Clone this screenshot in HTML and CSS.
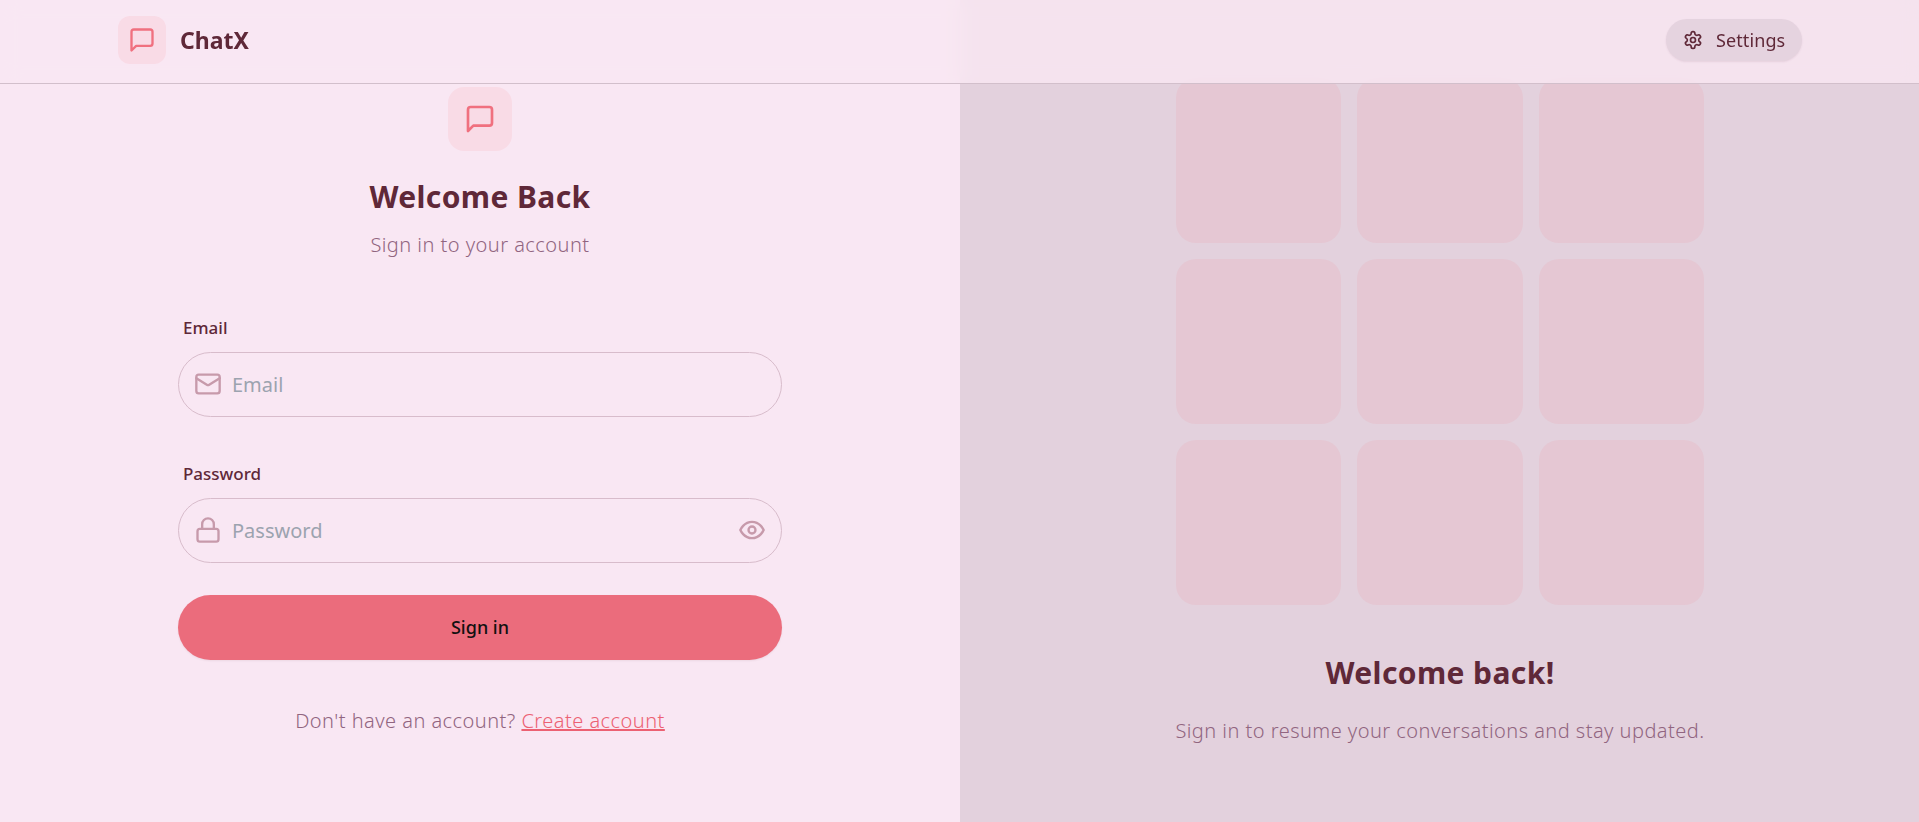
FILE: index.html
```html
<!DOCTYPE html>
<html lang="en">
<head>
  <meta charset="UTF-8">
  <meta name="viewport" content="width=device-width, initial-scale=1.0">
  <title>ChatX</title>
  <link rel="stylesheet" href="styles.css">
</head>
<body>
  <header class="navbar">
    <div class="brand">
      <div class="brand-icon">
        <svg class="icon" width="28" height="28" viewBox="0 0 24 24"><path d="M21 15a2 2 0 0 1-2 2H7l-4 4V5a2 2 0 0 1 2-2h14a2 2 0 0 1 2 2z"/></svg>
      </div>
      <span class="brand-name">ChatX</span>
    </div>
    <button class="settings-btn" type="button">
      <svg class="icon" width="20" height="20" viewBox="0 0 24 24"><path d="M12.22 2h-.44a2 2 0 0 0-2 2v.18a2 2 0 0 1-1 1.73l-.43.25a2 2 0 0 1-2 0l-.15-.08a2 2 0 0 0-2.73.73l-.22.38a2 2 0 0 0 .73 2.73l.15.1a2 2 0 0 1 1 1.72v.51a2 2 0 0 1-1 1.74l-.15.09a2 2 0 0 0-.73 2.73l.22.38a2 2 0 0 0 2.73.73l.15-.08a2 2 0 0 1 2 0l.43.25a2 2 0 0 1 1 1.73V20a2 2 0 0 0 2 2h.44a2 2 0 0 0 2-2v-.18a2 2 0 0 1 1-1.73l.43-.25a2 2 0 0 1 2 0l.15.08a2 2 0 0 0 2.73-.73l.22-.39a2 2 0 0 0-.73-2.73l-.15-.08a2 2 0 0 1-1-1.74v-.5a2 2 0 0 1 1-1.74l.15-.09a2 2 0 0 0 .73-2.73l-.22-.38a2 2 0 0 0-2.73-.73l-.15.08a2 2 0 0 1-2 0l-.43-.25a2 2 0 0 1-1-1.73V4a2 2 0 0 0-2-2z"/><circle cx="12" cy="12" r="3"/></svg>
      <span>Settings</span>
    </button>
  </header>

  <main class="page">
    <section class="form-side">
      <div class="form-card">
        <div class="form-head">
          <div class="form-icon">
            <svg class="icon" width="32" height="32" viewBox="0 0 24 24"><path d="M21 15a2 2 0 0 1-2 2H7l-4 4V5a2 2 0 0 1 2-2h14a2 2 0 0 1 2 2z"/></svg>
          </div>
          <h1>Welcome Back</h1>
          <p class="muted">Sign in to your account</p>
        </div>

        <form class="form">
          <div class="field">
            <label for="email">Email</label>
            <div class="input-wrap">
              <svg class="icon field-icon" width="28" height="28" viewBox="0 0 24 24"><rect x="2" y="4" width="20" height="16" rx="2"/><path d="m22 7-8.97 5.7a1.94 1.94 0 0 1-2.06 0L2 7"/></svg>
              <input id="email" type="email" placeholder="Email">
            </div>
          </div>
          <div class="field">
            <label for="password">Password</label>
            <div class="input-wrap">
              <svg class="icon field-icon" width="28" height="28" viewBox="0 0 24 24"><rect x="3" y="11" width="18" height="11" rx="2" ry="2"/><path d="M7 11V7a5 5 0 0 1 10 0v4"/></svg>
              <input id="password" type="password" placeholder="Password">
              <svg class="icon field-icon" width="28" height="28" viewBox="0 0 24 24"><path d="M2 12s3-7 10-7 10 7 10 7-3 7-10 7-10-7-10-7Z"/><circle cx="12" cy="12" r="3"/></svg>
            </div>
          </div>
          <button class="submit-btn" type="button">Sign in</button>
        </form>

        <p class="muted switch-link">Don't have an account? <a href="#">Create account</a></p>
      </div>
    </section>

    <section class="art-side">
      <div class="tiles">
        <div class="tile"></div>
        <div class="tile"></div>
        <div class="tile"></div>
        <div class="tile"></div>
        <div class="tile"></div>
        <div class="tile"></div>
        <div class="tile"></div>
        <div class="tile"></div>
        <div class="tile"></div>
      </div>
      <h2>Welcome back!</h2>
      <p class="muted">Sign in to resume your conversations and stay updated.</p>
    </section>
  </main>
</body>
</html>
```

FILE: styles.css
```css
* {
  box-sizing: border-box;
}

body {
  margin: 0;
  background-color: #f9e7f3;
  color: #5f2838;
  font-family: "Noto Sans", "Liberation Sans", sans-serif;
}

.icon {
  fill: none;
  stroke: currentColor;
  stroke-width: 2;
  stroke-linecap: round;
  stroke-linejoin: round;
  flex-shrink: 0;
}

/* navbar floats over the page, the tiles show through it */
.navbar {
  position: fixed;
  top: 0;
  left: 0;
  right: 0;
  z-index: 10;
  height: 84px;
  padding: 0 117px 3px 118px;
  display: flex;
  align-items: center;
  justify-content: space-between;
  background-color: rgba(249, 231, 243, 0.8);
  border-bottom: 1px solid #d2bfcb;
  backdrop-filter: blur(10px);
}

.brand {
  display: flex;
  align-items: center;
  gap: 14px;
}

.brand-icon {
  width: 48px;
  height: 48px;
  border-radius: 12px;
  background-color: #f9dbe6;
  color: #f0707f;
  display: flex;
  align-items: center;
  justify-content: center;
}

.brand-name {
  font-size: 23px;
  font-weight: 700;
}

.settings-btn {
  width: 136px;
  height: 42px;
  padding: 0 0 0 17px;
  display: flex;
  align-items: center;
  gap: 13px;
  border: none;
  border-radius: 22px;
  background-color: #e5d3df;
  color: #5f2838;
  font-family: inherit;
  font-size: 18px;
  letter-spacing: 0.1px;
  box-shadow: 0 1px 2px rgba(94, 37, 54, 0.1);
}

.page {
  display: grid;
  grid-template-columns: 960px 1fr;
  min-height: 100vh;
}

.form-side {
  display: flex;
  align-items: center;
  justify-content: center;
}

.form-card {
  width: 604px;
}

.form-head {
  display: flex;
  flex-direction: column;
  align-items: center;
}

.form-icon {
  width: 64px;
  height: 64px;
  border-radius: 16px;
  background-color: #f9dbe6;
  color: #f0707f;
  display: flex;
  align-items: center;
  justify-content: center;
}

h1, h2 {
  margin: 0;
  font-size: 30px;
  font-weight: 700;
  line-height: 40px;
  letter-spacing: 0.4px;
}

h1 {
  margin-top: 26px;
}

.muted {
  margin: 0;
  color: #916580;
  font-size: 20px;
  font-weight: 300;
  line-height: 28px;
  letter-spacing: 0.46px;
}

.form-head .muted {
  margin-top: 14px;
}

.form {
  margin-top: 58px;
  display: flex;
  flex-direction: column;
}

.field {
  margin-bottom: 32px;
}

.field:first-child {
  margin-bottom: 46px;
}

.field label {
  display: block;
  padding-left: 5px;
  margin-bottom: 13px;
  font-size: 17px;
  font-weight: 500;
  line-height: 22px;
}

.input-wrap {
  height: 65px;
  padding: 0 15px;
  display: flex;
  align-items: center;
  gap: 10px;
  border: 1px solid #d8bccb;
  border-radius: 33px;
}

.field-icon {
  color: #c79aab;
}

.input-wrap input {
  flex: 1;
  min-width: 0;
  border: none;
  outline: none;
  background: none;
  padding: 1px 0 0;
  color: #5f2838;
  font-family: inherit;
  font-size: 20px;
}

.input-wrap input::placeholder {
  color: #9ca3af;
}

.submit-btn {
  height: 65px;
  border: none;
  border-radius: 33px;
  background-color: #eb6c7c;
  color: #111;
  font-family: inherit;
  font-size: 18px;
  font-weight: 500;
  box-shadow: 0 1px 2px rgba(94, 37, 54, 0.08);
}

.switch-link {
  margin-top: 47px;
  margin-bottom: 1px;
  text-align: center;
}

.switch-link a {
  color: #ec6172;
}

.art-side {
  padding-left: 1px;
  background-color: #e3d1dd;
  display: flex;
  flex-direction: column;
  align-items: center;
  justify-content: center;
  text-align: center;
}

.tiles {
  width: 528px;
  display: grid;
  grid-template-columns: repeat(3, 1fr);
  gap: 16px;
}

.tile {
  height: 165px;
  border-radius: 20px;
  background-color: #e5c7d3;
}

.art-side h2 {
  margin-top: 48px;
}

.art-side .muted {
  margin-top: 24px;
}
```
